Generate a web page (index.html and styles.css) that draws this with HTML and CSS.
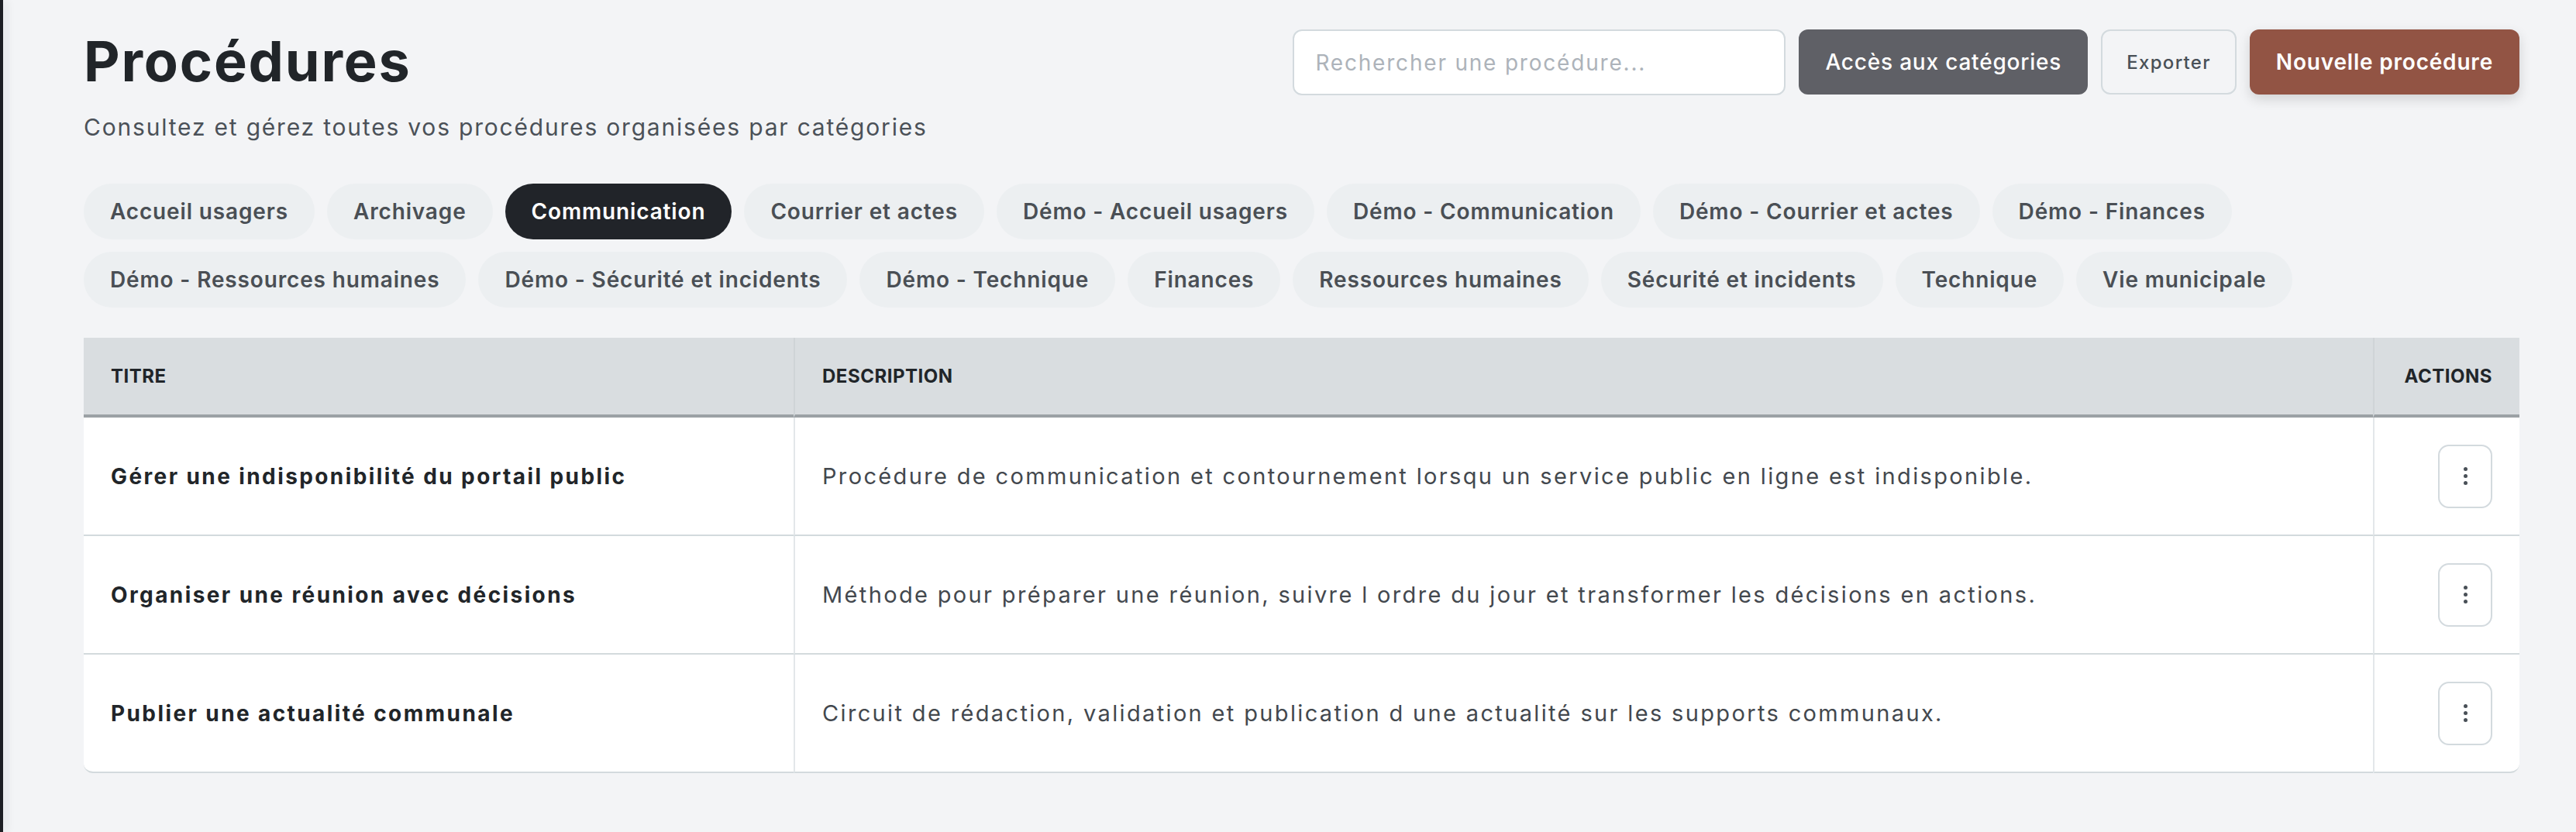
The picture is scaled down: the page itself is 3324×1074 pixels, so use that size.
FILE: index.html
```html
<!DOCTYPE html>
<html lang="fr">
  <head>
    <meta charset="UTF-8" />
    <meta name="viewport" content="width=device-width, initial-scale=1.0" />
    <title>Procédures</title>
    <link rel="stylesheet" href="styles.css">
  </head>
  <body>
    <div class="layout">
      <aside class="sidebar-edge"></aside>
      <main class="page">
        <header class="page-head">
          <div class="page-title">
            <h1>Procédures</h1>
            <p class="subtitle">Consultez et gérez toutes vos procédures organisées par catégories</p>
          </div>
          <div class="toolbar">
            <input type="text" class="search" placeholder="Rechercher une procédure..." />
            <button class="btn btn-dark">Accès aux catégories</button>
            <button class="btn btn-outline">Exporter</button>
            <button class="btn btn-primary">Nouvelle procédure</button>
          </div>
        </header>

        <nav class="categories">
          <a class="chip">Accueil usagers</a>
          <a class="chip">Archivage</a>
          <a class="chip active">Communication</a>
          <a class="chip">Courrier et actes</a>
          <a class="chip">Démo - Accueil usagers</a>
          <a class="chip">Démo - Communication</a>
          <a class="chip">Démo - Courrier et actes</a>
          <a class="chip">Démo - Finances</a>
          <a class="chip">Démo - Ressources humaines</a>
          <a class="chip">Démo - Sécurité et incidents</a>
          <a class="chip">Démo - Technique</a>
          <a class="chip">Finances</a>
          <a class="chip">Ressources humaines</a>
          <a class="chip">Sécurité et incidents</a>
          <a class="chip">Technique</a>
          <a class="chip">Vie municipale</a>
        </nav>

        <table class="procedures">
          <colgroup>
            <col class="col-title" />
            <col />
            <col class="col-actions" />
          </colgroup>
          <thead>
            <tr>
              <th>Titre</th>
              <th>Description</th>
              <th class="actions">Actions</th>
            </tr>
          </thead>
          <tbody>
            <tr>
              <td class="title">Gérer une indisponibilité du portail public</td>
              <td>Procédure de communication et contournement lorsqu un service public en ligne est indisponible.</td>
              <td class="actions"><button class="kebab" aria-label="Actions"><span></span><span></span><span></span></button></td>
            </tr>
            <tr>
              <td class="title">Organiser une réunion avec décisions</td>
              <td>Méthode pour préparer une réunion, suivre l ordre du jour et transformer les décisions en actions.</td>
              <td class="actions"><button class="kebab" aria-label="Actions"><span></span><span></span><span></span></button></td>
            </tr>
            <tr>
              <td class="title">Publier une actualité communale</td>
              <td>Circuit de rédaction, validation et publication d une actualité sur les supports communaux.</td>
              <td class="actions"><button class="kebab" aria-label="Actions"><span></span><span></span><span></span></button></td>
            </tr>
          </tbody>
        </table>
      </main>
    </div>
  </body>
</html>
```

FILE: styles.css
```css
body {
  margin: 0;
  font-family: Inter, "Open Sans", sans-serif;
  background-color: #f3f4f6;
  color: #212529;
}
.layout {
  display: flex;
  min-height: 100vh;
}
.sidebar-edge {
  width: 4px;
  flex-shrink: 0;
  background-color: #1e1f24;
  box-shadow: 4px 0 12px rgba(0, 0, 0, 0.12);
}
.page {
  flex: 1;
  padding: 36px 73px 0 104px;
}
.page-head {
  display: flex;
  justify-content: space-between;
  align-items: flex-start;
}
h1 {
  margin: 0;
  font-size: 72px;
  font-weight: 700;
  line-height: 1.2;
  color: #212529;
  letter-spacing: 1.8px;
}
.subtitle {
  margin: 20px 0 0;
  font-size: 30px;
  line-height: 1.5;
  color: #4b5158;
  letter-spacing: 1.8px;
}
.toolbar {
  display: flex;
  gap: 17px;
  margin-top: 2px;
}
.search {
  width: 636px;
  height: 85px;
  box-sizing: border-box;
  padding: 0 27px;
  border: 2px solid #d3dade;
  border-radius: 12px;
  background-color: white;
  font-family: inherit;
  font-size: 28px;
  letter-spacing: 1.8px;
  color: #212529;
}
.search::placeholder {
  color: #adb3ba;
}
.btn {
  height: 84px;
  padding: 0 34px;
  border: none;
  border-radius: 12px;
  font-family: inherit;
  font-size: 28px;
  font-weight: 500;
  letter-spacing: 0.8px;
  cursor: pointer;
}
.btn-dark {
  background-color: #5f6066;
  color: white;
}
.btn-outline {
  padding: 0 31px;
  background-color: #f3f4f6;
  border: 2px solid #d3dade;
  color: #495057;
  font-size: 24px;
  letter-spacing: 1.3px;
}
.btn-primary {
  background-color: #925444;
  color: white;
  font-weight: 600;
  letter-spacing: 0.8px;
  box-shadow: 0 6px 16px rgba(0, 0, 0, 0.14);
}
.categories {
  display: flex;
  flex-wrap: wrap;
  gap: 16px;
  margin-top: 50px;
}
.chip {
  padding: 18px 34px;
  line-height: 36px;
  border-radius: 36px;
  background-color: #eceff1;
  color: #4a4f55;
  font-size: 28px;
  font-weight: 600;
  letter-spacing: 0.85px;
  cursor: pointer;
}
.chip.active {
  background-color: #212429;
  color: white;
}
.procedures {
  width: 100%;
  margin-top: 39px;
  border-collapse: separate;
  border-spacing: 0;
  table-layout: fixed;
}
.col-title {
  width: 916px;
}
.col-actions {
  width: 189px;
}
th {
  height: 99px;
  padding: 0 35px;
  background-color: #d9dde0;
  border-bottom: 4px solid #9ba1a5;
  text-align: left;
  text-transform: uppercase;
  font-size: 24px;
  font-weight: 700;
  letter-spacing: 0.5px;
  color: #212529;
}
th + th {
  border-left: 2px solid #cfd4d7;
}
td {
  height: 151px;
  padding: 0 35px;
  background-color: white;
  border-bottom: 2px solid #d3dadd;
  font-size: 29px;
  letter-spacing: 2.35px;
  color: #43484e;
}
td + td {
  border-left: 2px solid #e3e7ea;
}
td.title {
  font-size: 28px;
  font-weight: 700;
  letter-spacing: 2.4px;
  color: #212529;
}
.actions {
  text-align: right;
}
tbody tr:last-child td:first-child {
  border-bottom-left-radius: 12px;
}
tbody tr:last-child td:last-child {
  border-bottom-right-radius: 12px;
}
.kebab {
  display: inline-flex;
  flex-direction: column;
  align-items: center;
  justify-content: center;
  gap: 4px;
  width: 70px;
  height: 82px;
  vertical-align: middle;
  border: 2px solid #d3dade;
  border-radius: 14px;
  background-color: white;
  cursor: pointer;
}
.kebab span {
  width: 5px;
  height: 5px;
  border-radius: 50%;
  background-color: #495057;
}
```
